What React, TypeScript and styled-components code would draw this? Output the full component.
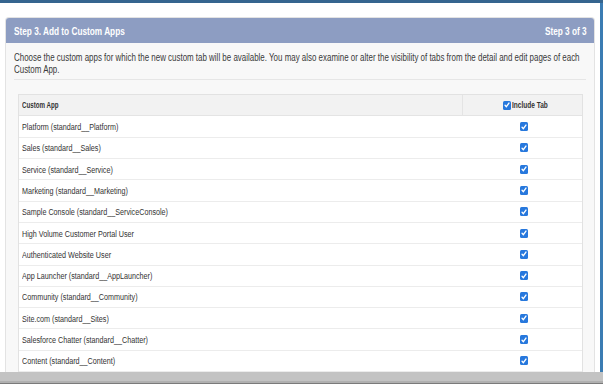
import React from "react";
import styled, { createGlobalStyle } from "styled-components";

const Global = createGlobalStyle`
  html, body { margin: 0; padding: 0; background: #ffffff; }
  body { font-family: "Liberation Sans", Arial, sans-serif; color: #333; }
  * { box-sizing: border-box; }
`;

const Page = styled.div`
  width: 603px;
  height: 384px;
  overflow: hidden;
  display: flex;
  flex-direction: column;
  background: #fff;
`;

const TopStrip = styled.div`
  height: 3px;
  flex: none;
  background: #35658f;
`;

const Middle = styled.div`
  flex: 1;
  display: flex;
  min-height: 0;
`;

const Content = styled.div`
  flex: 1;
  padding: 14px 0 0 5px;
  min-height: 0;
`;

const RightEdge = styled.div`
  width: 3px;
  flex: none;
  margin-left: 5px;
  background: #3b7cb3;
`;

const Panel = styled.div`
  width: 590px;
  height: 100%;
  background: #f8f8f8;
  border: 1px solid #e3e3e3;
  border-bottom: none;
  border-radius: 4px 4px 0 0;
  display: flex;
  flex-direction: column;
`;

const Squeeze = styled.span<{ $sx: number; $origin?: string }>`
  display: inline-block;
  white-space: nowrap;
  transform: scaleX(${(p) => p.$sx});
  transform-origin: ${(p) => p.$origin || "left"} center;
`;

const PanelHeader = styled.div`
  height: 25px;
  flex: none;
  background: #8d9dc2;
  border-radius: 3px 3px 0 0;
  display: flex;
  align-items: center;
  justify-content: space-between;
  padding: 0 7px 0 8px;
  color: #fff;
  font-weight: bold;
  font-size: 11px;
`;

const DESC_SX = 0.722;

const Description = styled.div`
  margin: 0 8px;
  padding: 8px 0 6px;
  border-bottom: 1px solid #e6e6e6;
  overflow: hidden;
`;

const DescText = styled.p`
  margin: 0;
  width: ${Math.round(574 / DESC_SX)}px;
  transform: scaleX(${DESC_SX});
  transform-origin: left top;
  font-size: 11px;
  line-height: 12px;
  color: #3a3a3a;
`;

const Table = styled.div`
  margin: 14px 11px 0 12px;
  background: #fff;
  border: 1px solid #e2e2e2;
  border-bottom: none;
  display: grid;
  grid-template-columns: 443px 1fr;
`;

const HeadCell = styled.div<{ $center?: boolean }>`
  height: 21px;
  background: #f2f2f2;
  border-bottom: 1px solid #e4e4e4;
  display: flex;
  align-items: center;
  justify-content: ${(p) => (p.$center ? "center" : "flex-start")};
  padding-left: ${(p) => (p.$center ? "0" : "3px")};
  font-size: 8.6px;
  font-weight: bold;
  color: #333;
  & + & { border-left: 1px solid #e4e4e4; }
`;

const Cell = styled.div<{ $center?: boolean }>`
  height: 21.3px;
  border-bottom: 1px solid #ececec;
  display: flex;
  align-items: center;
  justify-content: ${(p) => (p.$center ? "center" : "flex-start")};
  padding-left: ${(p) => (p.$center ? "3px" : "3px")};
  font-size: 9.6px;
  color: #333;
`;

const HeadLabel = styled.span`
  display: inline-flex;
  align-items: center;
  gap: 1px;
  margin-left: 18px;
`;

const Box = styled.span<{ $w: number; $h: number }>`
  width: ${(p) => p.$w}px;
  height: ${(p) => p.$h}px;
  border-radius: 1.5px;
  background: #2778dd;
  display: inline-flex;
  align-items: center;
  justify-content: center;
  flex: none;
`;

const ScrollBar = styled.div`
  height: 12px;
  flex: none;
  background: #c3c3c3;
  border-bottom: 1px solid #7a7a7a;
  box-shadow: inset 0 -2px 0 #b0b0b0;
`;

const Check = ({ w = 8, h = 9 }: { w?: number; h?: number }) => (
  <Box $w={w} $h={h}>
    <svg width="6" height="6" viewBox="0 0 8 8">
      <path d="M1.4 4.4 L3.2 6.3 L6.6 1.4" fill="none" stroke="#fff" strokeWidth="1.8" strokeLinecap="round" strokeLinejoin="round" />
    </svg>
  </Box>
);

const apps = [
  "Platform (standard__Platform)",
  "Sales (standard__Sales)",
  "Service (standard__Service)",
  "Marketing (standard__Marketing)",
  "Sample Console (standard__ServiceConsole)",
  "High Volume Customer Portal User",
  "Authenticated Website User",
  "App Launcher (standard__AppLauncher)",
  "Community (standard__Community)",
  "Site.com (standard__Sites)",
  "Salesforce Chatter (standard__Chatter)",
  "Content (standard__Content)",
];

export default function App() {
  return (
    <Page>
      <Global />
      <TopStrip />
      <Middle>
        <Content>
          <Panel>
            <PanelHeader>
              <Squeeze $sx={0.75}>Step 3. Add to Custom Apps</Squeeze>
              <Squeeze $sx={0.75} $origin="right">Step 3 of 3</Squeeze>
            </PanelHeader>
            <Description>
              <DescText>
                Choose the custom apps for which the new custom tab will be available. You may also examine or alter the visibility of tabs from the detail and edit pages of each Custom App.
              </DescText>
            </Description>
            <Table>
              <HeadCell>
                <Squeeze $sx={0.72}>Custom App</Squeeze>
              </HeadCell>
              <HeadCell $center>
                <HeadLabel>
                  <Check w={8} h={9} />
                  <Squeeze $sx={0.76}>Include Tab</Squeeze>
                </HeadLabel>
              </HeadCell>
              {apps.map((a) => (
                <React.Fragment key={a}>
                  <Cell>
                    <Squeeze $sx={0.75}>{a}</Squeeze>
                  </Cell>
                  <Cell $center>
                    <Check />
                  </Cell>
                </React.Fragment>
              ))}
            </Table>
          </Panel>
        </Content>
        <RightEdge />
      </Middle>
      <ScrollBar />
    </Page>
  );
}
